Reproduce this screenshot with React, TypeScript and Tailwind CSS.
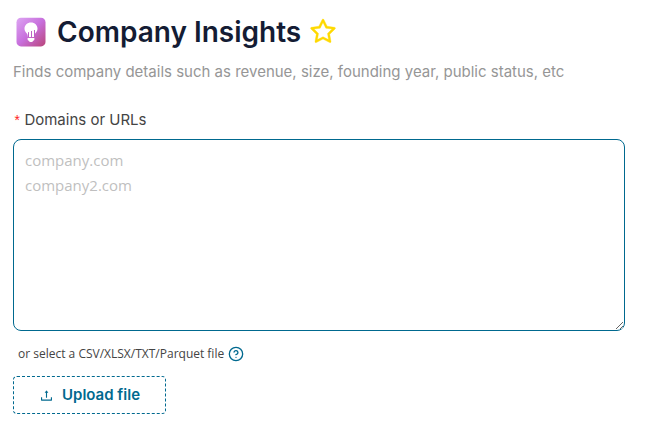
import { useId, useState } from 'react'
import { AiOutlineStar, AiOutlineUpload } from 'react-icons/ai'
import { CircleHelp } from 'lucide-react'

const App: React.FC = () => {
  return (
    <main className="max-w-5xl bg-white pt-3 pr-[43px] pb-2 pl-[13px] font-['Inter',sans-serif]">
      <Header />
      <DomainsField />
      <UploadBlock />
    </main>
  )
}

const Header: React.FC = () => {
  return (
    <header>
      <div className="flex h-10 items-center">
        <InsightsIcon />
        <h1 className="ml-2 text-[28px] font-semibold text-[#141c34]">Company Insights</h1>
        <button type="button" aria-label="Add to favorites" className="ml-[7px] text-[#ffd900]">
          <AiOutlineStar className="size-[30px]" stroke="currentColor" strokeWidth={12} />
        </button>
      </div>
      <p className="mt-2 text-[15px] leading-6 text-[#969696]">
        Finds company details such as revenue, size, founding year, public status, etc
      </p>
    </header>
  )
}

const InsightsIcon: React.FC = () => {
  return (
    <svg viewBox="0 0 36 36" className="size-9" aria-hidden="true">
      <defs>
        <linearGradient id="insights" x1="0" y1="0" x2="1" y2="1">
          <stop offset="0" stopColor="#dda5f3" />
          <stop offset="0.5" stopColor="#c76fdc" />
          <stop offset="1" stopColor="#b94579" />
        </linearGradient>
      </defs>
      <rect x="3.5" y="3.8" width="29" height="28.6" rx="4.5" fill="url(#insights)" />
      <path
        d="M18 8.4c-3.8 0-6.5 2.7-6.5 6.1 0 2 .8 3.4 1.9 4.5 1 1 1.4 2 1.5 3.9h6.2c.1-1.9.5-2.9 1.5-3.9 1.1-1.1 1.9-2.5 1.9-4.5 0-3.4-2.7-6.1-6.5-6.1z"
        fill="#fff"
      />
      <path d="M14.6 24h6.8v1.3c0 .8-.5 1.3-1.2 1.5-.3.8-1 1.3-2.2 1.3s-1.9-.5-2.2-1.3c-.7-.2-1.2-.7-1.2-1.5z" fill="#fff" />
      <path d="M15.5 18.2v5M18.5 17v6.2M21.5 16v7.2" stroke="#bd61c6" />
    </svg>
  )
}

const DomainsField: React.FC = () => {
  const id = useId()
  const [value, setValue] = useState('')

  return (
    <div className="mt-6 flex flex-col">
      <label htmlFor={id} className="flex h-6 items-center gap-[3px] text-[15px] text-[#444]">
        <span className="pt-1 font-['Liberation_Mono',monospace] text-sm text-[#ff1f24]">*</span>
        Domains or URLs
      </label>
      <textarea
        id={id}
        required
        value={value}
        onChange={(e) => setValue(e.target.value)}
        placeholder={'company.com\ncompany2.com'}
        className="mt-[7px] h-48 resize rounded-lg border border-[#00698f] px-[11px] py-2 font-['Open_Sans',sans-serif] text-[15px] leading-[25px] text-[#444] outline-none placeholder:text-[#bfbfbf]"
      />
    </div>
  )
}

const UploadBlock: React.FC = () => {
  return (
    <div>
      <div className="mt-[11px] flex h-6 items-center gap-1 pl-[5px]">
        <span className="font-['Open_Sans',sans-serif] text-xs text-[#444]">or select a CSV/XLSX/TXT/Parquet file</span>
        <button type="button" aria-label="Help" className="text-[#00698f]">
          <CircleHelp className="size-4" />
        </button>
      </div>
      <button
        type="button"
        className="mt-2.5 flex h-[38px] items-center gap-2 rounded-sm border border-dashed border-[#00698f] px-[25px] text-[15px] font-semibold text-[#00698f]"
      >
        <AiOutlineUpload className="size-[15px]" />
        Upload file
      </button>
    </div>
  )
}

export default App
